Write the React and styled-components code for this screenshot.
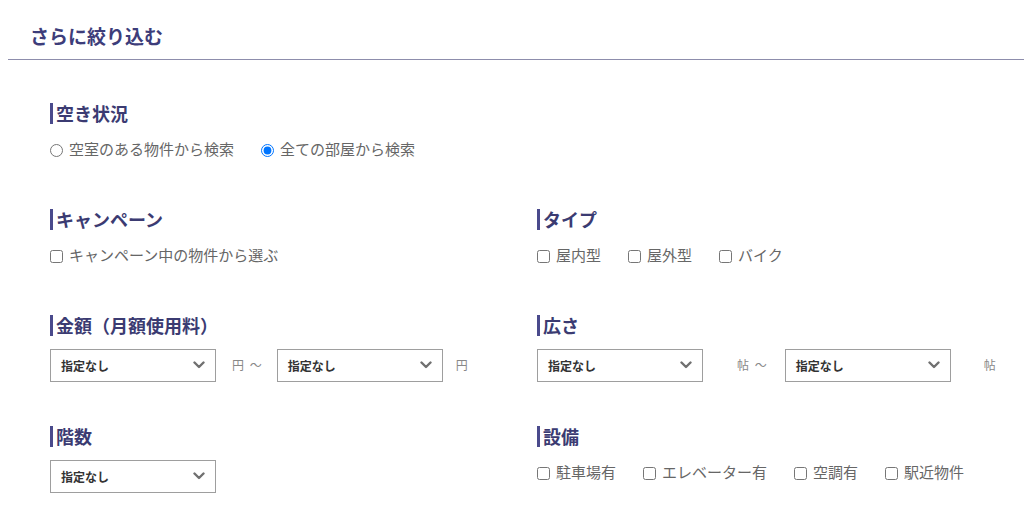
import React from "react";
import styled, { createGlobalStyle } from "styled-components";

const Global = createGlobalStyle`
  html, body { margin: 0; padding: 0; background: #fff; }
  body { font-family: "Noto Sans CJK JP", "Noto Sans", sans-serif; }
  * { box-sizing: border-box; }
`;

const Page = styled.div`
  padding-left: 8px;
  width: 1024px;
`;

const Header = styled.header`
  border-bottom: 1px solid #8d8dac;
  padding: 24px 22px 11px;
`;

const Title = styled.h2`
  margin: 0;
  font-size: 19px;
  line-height: 24px;
  font-weight: 700;
  color: #3d3d7a;
`;

const Body = styled.div`
  padding: 41px 0 0 42px;
  display: grid;
  grid-template-columns: 487px 1fr;
  row-gap: 42px;
  align-items: start;
`;

const Section = styled.section`
  grid-column: ${(p) => (p.$full ? "1 / -1" : "auto")};
`;

const Heading = styled.h3`
  margin: 0 0 12px;
  height: 24px;
  display: flex;
  align-items: center;
  font-size: 18px;
  font-weight: 700;
  color: #3b3b72;
  &::before {
    content: "";
    width: 3px;
    height: 21px;
    background: #4a4a8c;
    margin-right: 3px;
  }
`;

const OptionRow = styled.div`
  display: flex;
  align-items: center;
  height: 28px;
  padding-bottom: 4px;
  gap: 27px;
`;

const Option = styled.label`
  display: flex;
  align-items: center;
  font-size: 15px;
  line-height: 20px;
  color: #666;
  white-space: nowrap;
  input {
    margin: 2px 6px 0 0;
    width: 13px;
    height: 13px;
  }
`;

const RangeRow = styled.div`
  display: flex;
  align-items: center;
`;

const SelectBox = styled.div`
  width: 166px;
  height: 33px;
  border: 1px solid #9e9e9e;
  display: flex;
  align-items: center;
  justify-content: space-between;
  padding: 0 10px 1px 10px;
  font-size: 12px;
  font-weight: 700;
  color: #333;
  background: #fff;
`;

const Unit = styled.span`
  font-size: 12px;
  color: #888;
  word-spacing: 3px;
  margin: 0 ${(p) => p.$after}px 3px ${(p) => p.$before}px;
  white-space: nowrap;
`;

const Chevron = () => (
  <svg width="12" height="8" viewBox="0 0 12 8" fill="none">
    <polyline points="1.5,1.5 6,6 10.5,1.5" stroke="#707070" strokeWidth="2.4" strokeLinecap="round" strokeLinejoin="round" />
  </svg>
);

const Select = () => (
  <SelectBox>
    <span>指定なし</span>
    <Chevron />
  </SelectBox>
);

const Checks = ({ items }) => (
  <OptionRow>
    {items.map((t) => (
      <Option key={t}>
        <input type="checkbox" readOnly />
        {t}
      </Option>
    ))}
  </OptionRow>
);

export default function App() {
  return (
    <>
      <Global />
      <Page>
        <Header>
          <Title>さらに絞り込む</Title>
        </Header>
        <Body>
          <Section $full>
            <Heading>空き状況</Heading>
            <OptionRow>
              <Option>
                <input type="radio" name="vac" readOnly />
                空室のある物件から検索
              </Option>
              <Option>
                <input type="radio" name="vac" defaultChecked />
                全ての部屋から検索
              </Option>
            </OptionRow>
          </Section>

          <Section>
            <Heading>キャンペーン</Heading>
            <Checks items={["キャンペーン中の物件から選ぶ"]} />
          </Section>
          <Section>
            <Heading>タイプ</Heading>
            <Checks items={["屋内型", "屋外型", "バイク"]} />
          </Section>

          <Section>
            <Heading>金額（月額使用料）</Heading>
            <RangeRow>
              <Select />
              <Unit $before={16} $after={15}>円 ～</Unit>
              <Select />
              <Unit $before={13} $after={0}>円</Unit>
            </RangeRow>
          </Section>
          <Section>
            <Heading>広さ</Heading>
            <RangeRow>
              <Select />
              <Unit $before={34} $after={18}>帖 ～</Unit>
              <Select />
              <Unit $before={33} $after={0}>帖</Unit>
            </RangeRow>
          </Section>

          <Section>
            <Heading>階数</Heading>
            <Select />
          </Section>
          <Section>
            <Heading>設備</Heading>
            <Checks items={["駐車場有", "エレベーター有", "空調有", "駅近物件"]} />
          </Section>
        </Body>
      </Page>
    </>
  );
}
